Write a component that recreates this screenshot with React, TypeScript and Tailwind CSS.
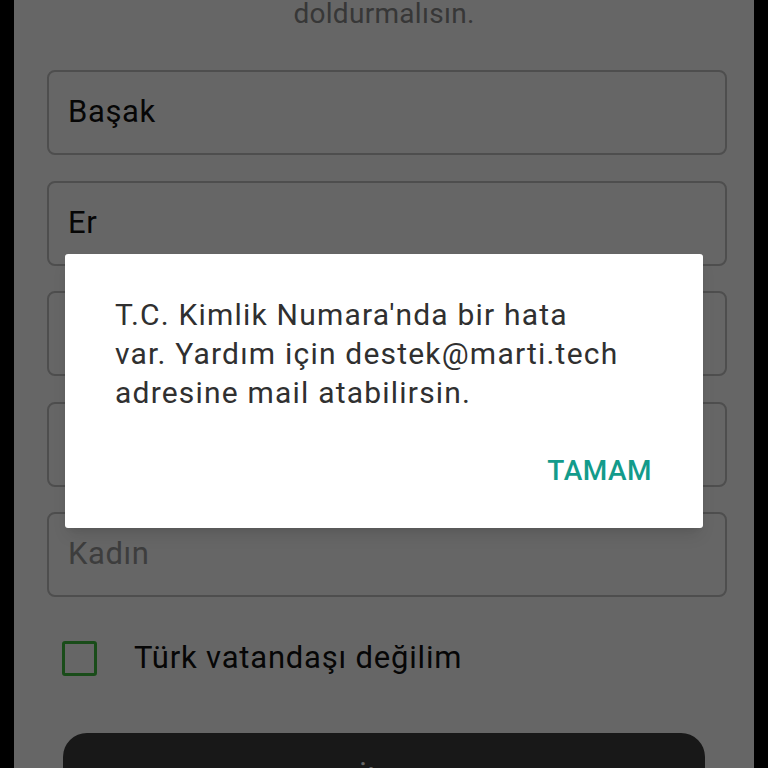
const fields = [
  { value: 'Başak', placeholder: 'Ad' },
  { value: 'Er', placeholder: 'Soyad' },
  { value: '', placeholder: 'T.C. Kimlik Numarası' },
  { value: '', placeholder: 'Doğum Tarihi' },
  { value: '', placeholder: 'Kadın' },
];

const Field = ({ value, placeholder }: { value: string; placeholder: string }) => (
  <div className="h-[85px] rounded-lg border-2 border-[#c2c2c2] flex items-center px-[19px]">
    {value ? (
      <span className="text-[31px] tracking-[0.6px] text-[#111]">{value}</span>
    ) : (
      <span className="text-[31px] tracking-[0.6px] text-[#9a9a9a]">{placeholder}</span>
    )}
  </div>
);

export default function App() {
  return (
    <div className="w-[768px] h-[768px] bg-black flex justify-center overflow-hidden" style={{ fontFamily: 'Roboto, "Noto Sans", sans-serif' }}>
      <div className="relative w-[740px] h-full bg-white overflow-hidden">
        <div className="flex flex-col">
          <p className="-mt-[40px] text-center text-[28px] leading-[36px] tracking-[0.3px] text-[#8a8a8a]">
            Devam etmek için tüm alanları
            <br />
            doldurmalısın.
          </p>

          <div className="mt-[38px] pl-[33px] pr-[27px] flex flex-col gap-[25.5px]">
            {fields.map((f) => (
              <Field key={f.placeholder} value={f.value} placeholder={f.placeholder} />
            ))}
          </div>

          <label className="mt-[44px] ml-[48px] flex items-center gap-[37px] h-[34px]">
            <span className="w-[35px] h-[35px] rounded-[3px] border-[3px] border-[#3fbf3f]" />
            <span className="text-[31px] tracking-[0.8px] text-[#111]">Türk vatandaşı değilim</span>
          </label>

          <div className="mt-[58px] mx-[49px] h-[80px] rounded-[24px] bg-[#3c3c3c] flex items-start justify-center pt-[24px]">
            <span className="text-[31px] text-white">İleri</span>
          </div>
        </div>

        <div className="absolute inset-0 bg-black/60" />

        <div className="absolute left-[51px] top-[254px] w-[638px] h-[274px] bg-white rounded-[3px] shadow-lg flex flex-col pl-[50px] pr-[51px] pt-[41px]">
          <p className="text-[30px] leading-[39px] tracking-[1.2px] text-[#303030] whitespace-nowrap">
            T.C. Kimlik Numara'nda bir hata
            <br />
            var. Yardım için destek@marti.tech
            <br />
            adresine mail atabilirsin.
          </p>
          <div className="mt-auto mb-[40px] flex justify-end">
            <button className="text-[28px] font-medium tracking-[0.5px] text-[#139b8b] leading-[34px]">TAMAM</button>
          </div>
        </div>
      </div>
    </div>
  );
}
